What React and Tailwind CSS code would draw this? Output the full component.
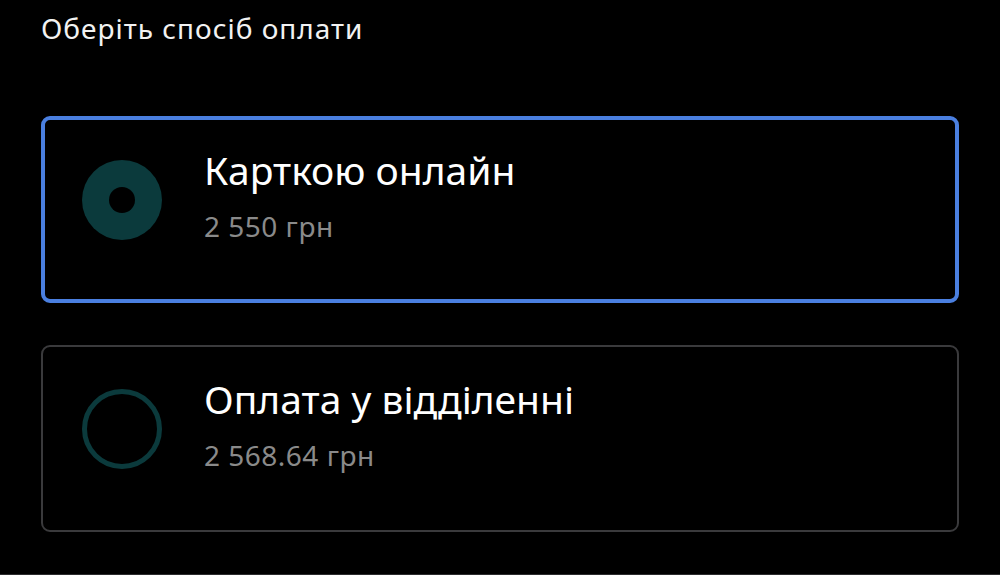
import React, { useState } from 'react';

const options = [
  { id: 'card', title: 'Карткою онлайн', price: '2 550 грн' },
  { id: 'office', title: 'Оплата у відділенні', price: '2 568.64 грн' },
];

function Radio({ checked }) {
  if (checked) {
    return (
      <div className="w-[80px] h-[80px] shrink-0 rounded-full bg-[#0b3a3c] flex items-center justify-center">
        <div className="w-[26px] h-[26px] rounded-full bg-black" />
      </div>
    );
  }
  return <div className="w-[80px] h-[80px] shrink-0 rounded-full border-[5px] border-[#0b3a3c]" />;
}

export default function App() {
  const [selected, setSelected] = useState('card');

  return (
    <div
      className="w-[1000px] h-[575px] bg-black overflow-hidden border-b border-[#2c2c2e] flex flex-col px-[41px]"
      style={{ fontFamily: '"Noto Sans", sans-serif' }}
    >
      <div className="pt-[10px] text-[28px] leading-[36px] tracking-[1px] text-[#f2f2f2]">
        Оберіть спосіб оплати
      </div>

      <div className="mt-[70px] flex flex-col gap-[42px]">
        {options.map((o) => {
          const active = selected === o.id;
          return (
            <button
              key={o.id}
              onClick={() => setSelected(o.id)}
              className={`w-[918px] h-[187px] rounded-[9px] flex items-start text-left ${
                active ? 'border-4 border-[#4a7fe0] pl-[37px]' : 'border-2 border-[#3a3a3c] pl-[39px]'
              }`}
            >
              <div className={active ? 'pt-[40px]' : 'pt-[42px]'}>
                <Radio checked={active} />
              </div>
              <div className={`ml-[42px] flex flex-col ${active ? 'pt-[24px]' : 'pt-[26px]'}`}>
                <span className="text-[39px] leading-[52px] text-white">{o.title}</span>
                <span className="mt-[13px] text-[28px] leading-[34px] tracking-[0.5px] text-[#8a8a8a]">
                  {o.price}
                </span>
              </div>
            </button>
          );
        })}
      </div>
    </div>
  );
}
